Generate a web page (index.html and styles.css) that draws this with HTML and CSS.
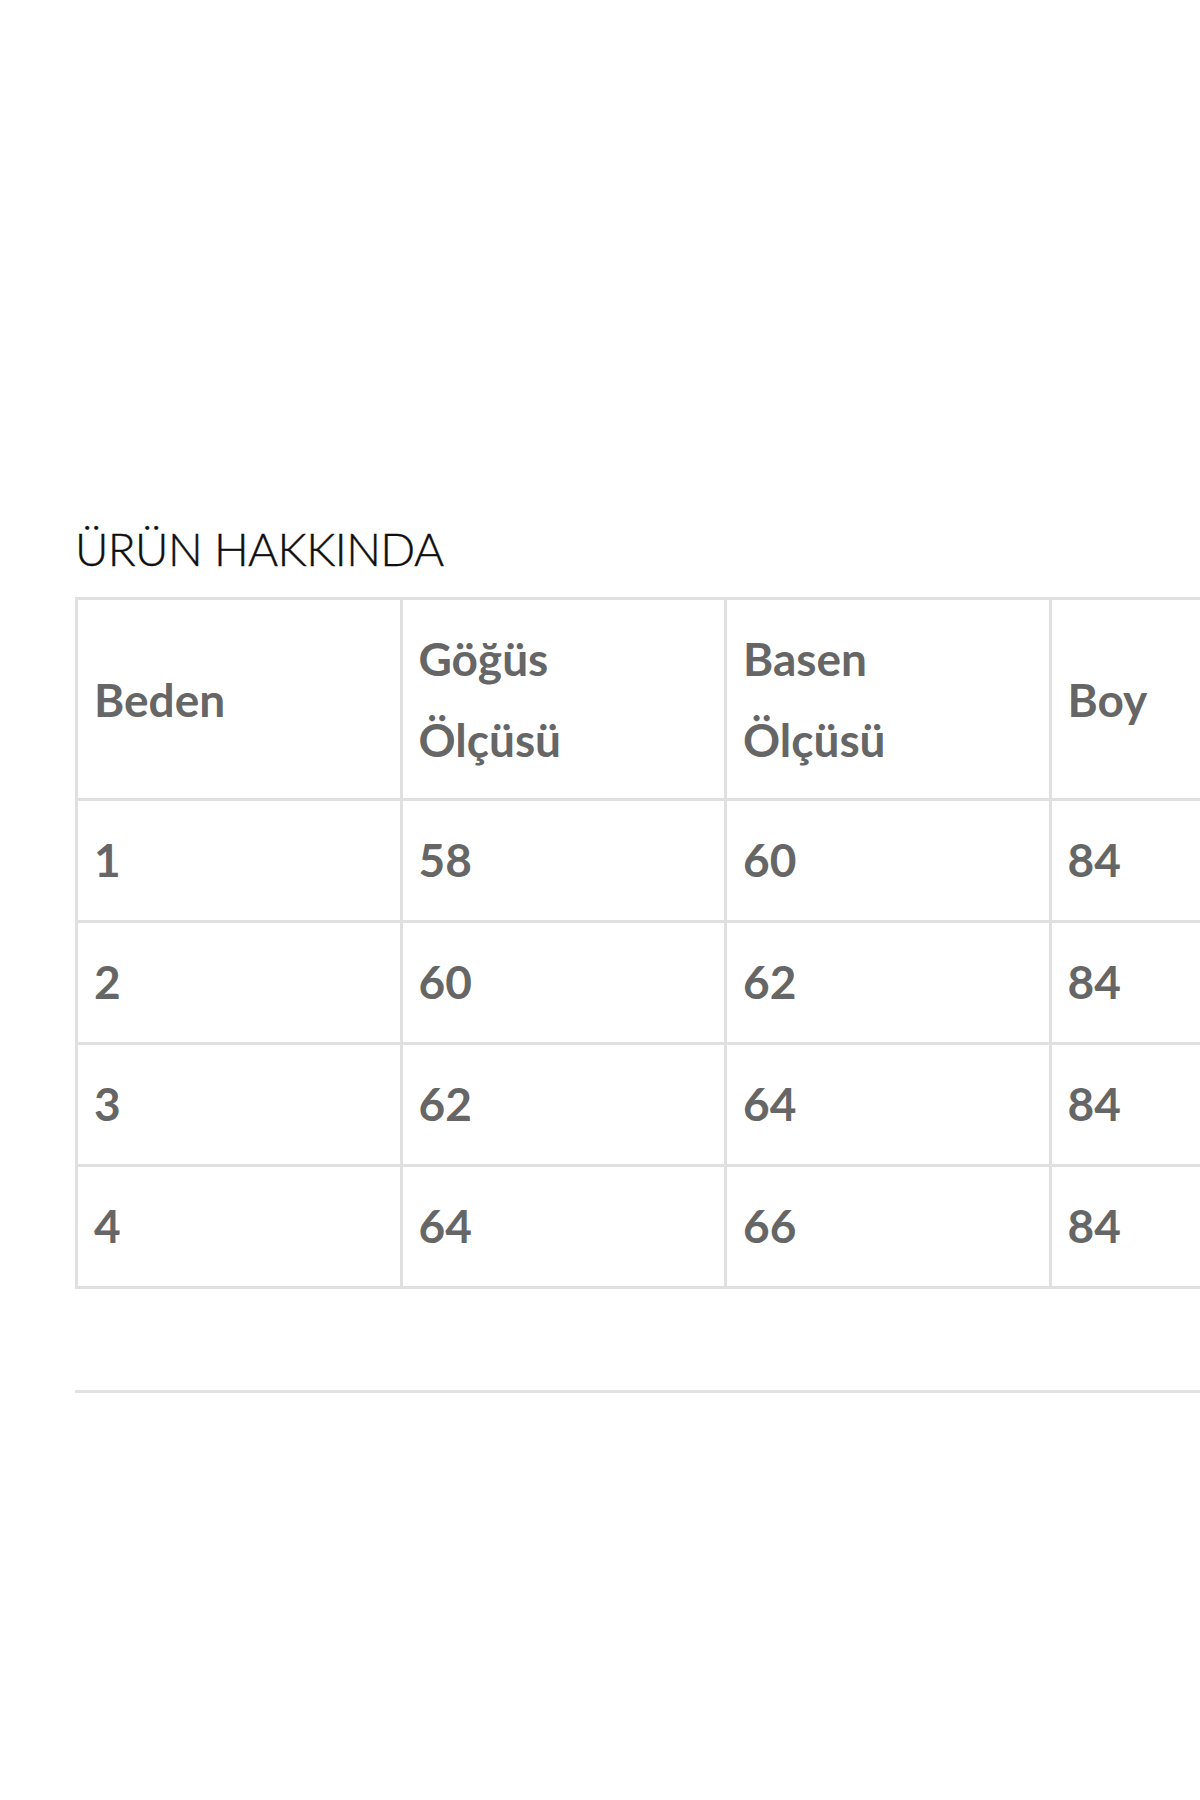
FILE: index.html
```html
<!DOCTYPE html>
<html lang="tr">
<head>
<meta charset="utf-8">
<title>Ürün Hakkında</title>
<link rel="stylesheet" href="styles.css">
</head>
<body>
<main class="page">
  <section class="about">
    <h2 class="about-title">ÜRÜN HAKKINDA</h2>
    <div class="table-wrap">
      <table class="size-table">
        <colgroup>
          <col class="c"><col class="c"><col class="c"><col class="c">
        </colgroup>
        <thead>
          <tr>
            <th>Beden</th>
            <th>Göğüs<br>Ölçüsü</th>
            <th>Basen<br>Ölçüsü</th>
            <th>Boy</th>
          </tr>
        </thead>
        <tbody>
          <tr><td>1</td><td>58</td><td>60</td><td>84</td></tr>
          <tr><td>2</td><td>60</td><td>62</td><td>84</td></tr>
          <tr><td>3</td><td>62</td><td>64</td><td>84</td></tr>
          <tr><td>4</td><td>64</td><td>66</td><td>84</td></tr>
        </tbody>
      </table>
    </div>
    <hr class="divider">
  </section>
</main>
</body>
</html>
```

FILE: styles.css
```css
html, body {
  margin: 0;
  padding: 0;
  background: #ffffff;
  overflow-x: hidden;
}

body {
  font-family: Lato, "Open Sans", sans-serif;
  width: 1200px;
  min-height: 1800px;
}

.page {
  padding: 519px 0 0 75px;
}

.about-title {
  margin: 0 0 18px 0;
  font-size: 46px;
  line-height: 60px;
  font-weight: 300;
  color: #0f0f0f;
  letter-spacing: -0.6px;
  -webkit-text-stroke: 0.4px #0f0f0f;
}

.table-wrap {
  overflow: hidden;
  width: 1125px;
}

.size-table {
  border-collapse: collapse;
  table-layout: fixed;
  width: 1301px;
}

.size-table .c {
  width: 324.5px;
}

.size-table th,
.size-table td {
  border: 3px solid #e0e0e0;
  text-align: left;
  vertical-align: middle;
  font-size: 46px;
  line-height: 81px;
  font-weight: 700;
  color: #666666;
}

.size-table th {
  padding: 18px 16px;
}

.size-table td {
  padding: 18px 16px 20px;
}

.divider {
  margin: 101px 0 0 0;
  border: 0;
  height: 3px;
  background: #e2e2e2;
  width: 1125px;
}
```
